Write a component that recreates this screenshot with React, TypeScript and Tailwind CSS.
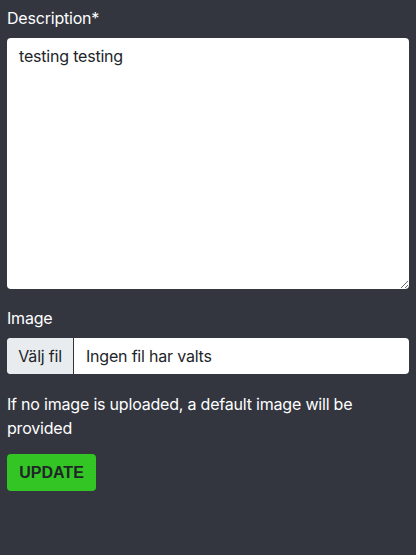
export default function App() {
  return (
    <div className="min-h-[555px] bg-[#33363f] px-[7px] pt-[6px] font-['Inter','Noto_Sans',sans-serif] text-[16px] leading-6 tracking-[-0.2px] text-white">
      <div className="mb-[17px]">
        <label className="mb-2 block">Description*</label>
        <textarea
          defaultValue="testing testing"
          className="block h-[251px] w-full resize-y rounded-[4px] bg-white px-3 py-1.5 text-[#212529] outline-none"
        />
      </div>
      <div className="mb-[18px]">
        <label className="mb-2 block">Image</label>
        <div className="flex h-9 w-full overflow-hidden rounded-[4px] bg-white text-[#212529]">
          <span className="flex w-[67px] items-center justify-center border-r border-[#333] bg-[#e9ecef]">Välj fil</span>
          <span className="flex items-center px-3">Ingen fil har valts</span>
        </div>
      </div>
      <p className="mb-[14px]">If no image is uploaded, a default image will be provided</p>
      <button className="h-[37px] w-[89px] rounded-[4px] bg-[#32c523] font-['Liberation_Sans',sans-serif] font-bold tracking-normal text-[#212529]">
        UPDATE
      </button>
    </div>
  );
}
